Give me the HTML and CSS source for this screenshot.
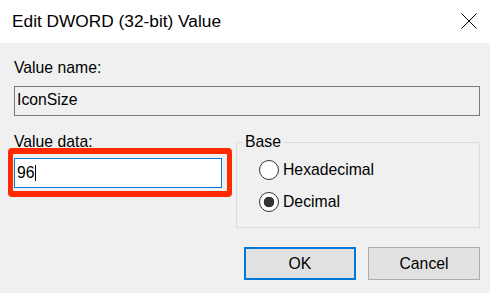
FILE: index.html
```html
<!DOCTYPE html>
<html lang="en">
<head>
<meta charset="UTF-8" />
<meta name="viewport" content="width=device-width, initial-scale=1" />
<title>Edit DWORD (32-bit) Value</title>
<link rel="stylesheet" href="styles.css">
</head>
<body>
<header class="titlebar">
  <span class="title">Edit DWORD (32-bit) Value</span>
  <svg class="close" viewBox="0 0 16 16" aria-label="Close"><path d="M0.5 0.5 L15.5 15.5 M15.5 0.5 L0.5 15.5" /></svg>
</header>

<main class="content">
  <label class="field-label">Value name:</label>
  <div class="textbox readonly">IconSize</div>

  <div class="data-row">
    <div class="data-col">
      <label class="field-label">Value data:</label>
      <div class="highlight">
        <div class="textbox active">96<span class="caret"></span></div>
      </div>
    </div>
    <fieldset class="base">
      <legend>Base</legend>
      <label class="radio"><input type="radio" name="base" /> Hexadecimal</label>
      <label class="radio"><input type="radio" name="base" checked /> Decimal</label>
    </fieldset>
  </div>

  <div class="buttons">
    <button class="btn default">OK</button>
    <button class="btn">Cancel</button>
  </div>
</main>
</body>
</html>
```

FILE: styles.css
```css
* {
  box-sizing: border-box;
}
body {
  margin: 0;
  font-family: 'Liberation Sans', Arial, sans-serif;
  font-size: 15.75px;
  line-height: 18px;
  background-color: #f0f0f0;
  color: #000;
}
.titlebar {
  display: flex;
  justify-content: space-between;
  align-items: flex-start;
  height: 43px;
  padding: 11px 13px 0 12px;
  background-color: #fff;
}
.title {
  font-size: 17.3px;
  line-height: 20px;
}
.close {
  width: 16px;
  height: 16px;
  margin-top: 2px;
  fill: none;
  stroke: #000;
  stroke-width: 1;
}
.content {
  padding: 16px 10px 0 14px;
}
.field-label {
  display: block;
}
.textbox {
  display: flex;
  align-items: center;
  height: 30px;
  margin-top: 9px;
  padding: 0 2px;
  border: 1px solid #7a7a7a;
}
.textbox.readonly {
  background-color: #f0f0f0;
  padding-bottom: 2px;
}
.textbox.active {
  margin-top: 0;
  background-color: #fff;
  border-color: #0078d7;
}
.caret {
  width: 1px;
  height: 16px;
  background-color: #000;
}
.data-row {
  display: flex;
  align-items: flex-start;
  gap: 14px;
  margin-top: 17px;
}
.data-col {
  width: 208px;
}
.highlight {
  position: relative;
  margin-top: 7px;
}
/* red annotation frame drawn over the field */
.highlight::after {
  content: '';
  position: absolute;
  top: -10px;
  left: -6px;
  right: -10px;
  bottom: -9px;
  border: 5px solid #ff2a00;
  border-top-width: 6px;
  border-bottom-width: 6px;
  border-radius: 4px;
  pointer-events: none;
}
.base {
  width: 244px;
  min-width: 0;
  margin: 0;
  padding: 9px 0 15px 0;
  border: 1px solid #dcdcdc;
}
.base legend {
  margin-left: 6px;
  padding: 0 2px;
  line-height: 18px;
}
.radio {
  display: flex;
  align-items: center;
  gap: 4px;
  height: 20px;
  padding-left: 22px;
}
.radio + .radio {
  margin-top: 12px;
}
.radio input {
  appearance: none;
  -webkit-appearance: none;
  width: 20px;
  height: 20px;
  margin: 0;
  border: 1px solid #333;
  border-radius: 50%;
  background-color: #fff;
}
.radio input:checked {
  background: radial-gradient(circle, #333 0 5px, #fff 5.6px);
}
.buttons {
  display: flex;
  justify-content: flex-end;
  gap: 12px;
  margin-top: 19px;
}
.btn {
  width: 112px;
  height: 33px;
  padding: 0;
  font: inherit;
  color: #000;
  background-color: #e1e1e1;
  border: 1px solid #adadad;
}
.btn.default {
  border: 2px solid #0078d7;
}
```
